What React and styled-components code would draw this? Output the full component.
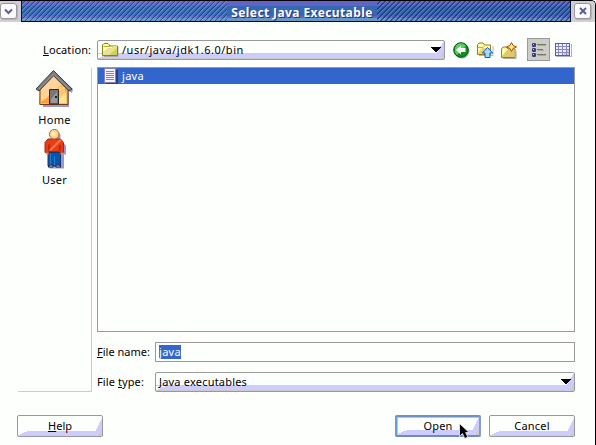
import React from 'react';
import styled, { createGlobalStyle } from 'styled-components';

const GlobalStyle = createGlobalStyle`
  * { box-sizing: border-box; }
  body { margin: 0; overflow: hidden; background: #fdfffd; }
`;

const Window = styled.div`
  position: relative;
  width: 596px;
  height: 445px;
  display: flex;
  flex-direction: column;
  background: #fdfffd;
  border-right: 1px solid #000;
  border-top: 1px solid #000;
  border-top-right-radius: 5px;
  overflow: hidden;
  color: #000;
  font: 11px/14px 'Noto Sans', 'Open Sans', sans-serif;
`;

const TitleBar = styled.header`
  display: flex;
  height: 21px;
`;

const TitleEnd = styled.div`
  flex: none;
  width: ${p => p.$width}px;
  padding: 2px 0 0 ${p => p.$pad}px;
  background: #d0ced4;
  border-bottom: 1px solid #ccccff;
`;

const FrameButton = styled.div`
  width: 17px;
  height: 16px;
  border: 1px solid #99979c;
  border-radius: 3px;
  background: #fbfbff;
  box-shadow: 1px 1px 0 #b6b4be;
  display: flex;
  align-items: center;
  justify-content: center;
`;

const TitleFill = styled.div`
  flex: 1;
  display: flex;
  justify-content: center;
  border-left: 1px solid #111133;
  border-right: 1px solid #111133;
  border-bottom: 1px solid #000;
  background:
    repeating-linear-gradient(135deg, transparent 0 1.8px, rgba(18, 38, 100, .6) 1.8px 2.8px, rgba(112, 160, 218, .45) 2.8px 3.536px),
    linear-gradient(#6263c6 0 5px, #3568b2 5px 15px, #6263c6 15px 17px, #5d9ac9 17px);
`;

const Title = styled.h1`
  margin: 0 0 0 12px;
  width: 150px;
  height: 20px;
  text-align: center;
  white-space: nowrap;
  color: #fff;
  font: bold 12px/24px 'Noto Sans', sans-serif;
  letter-spacing: ${p => p.$spacing}px;
  text-shadow: 1px 1px 0 #27306c;
  background: linear-gradient(#6263c6 0 5px, #3568b2 5px 15px, #6263c6 15px 17px, #5d9ac9 17px);
`;

const LocationRow = styled.div`
  display: flex;
  height: 24px;
  margin-top: 16px;
  padding-left: 43px;
`;

const Text = styled.span`
  display: block;
  flex: none;
  white-space: nowrap;
  letter-spacing: ${p => p.$spacing || 0}px;
  width: ${p => (p.$width ? `${p.$width}px` : 'auto')};
  u { text-underline-offset: 1px; text-decoration-thickness: 1px; text-decoration-skip-ink: none; }
`;

const LocationLabel = styled(Text)`
  padding-top: 5px;
`;

const Combo = styled.div`
  display: flex;
  align-items: center;
  flex: none;
  width: ${p => p.$width}px;
  height: ${p => p.$height}px;
  margin-top: ${p => p.$top || 0}px;
  padding: 0 3px 0 ${p => p.$pad}px;
  border: 1px solid #999;
  border-radius: 2px;
  background:
    linear-gradient(156deg, #fdfffd 0 4px, transparent 4px) left bottom / 11px 5px no-repeat,
    linear-gradient(120deg, transparent 0 7px, #ccccff 7px 12px, #ccc 12px) right bottom / 9px 17px no-repeat,
    linear-gradient(#ccccff 0 5px, #cacacc 5px) left bottom / 100% 6px no-repeat,
    #fdfffd;
`;

const PathText = styled(Text)`
  margin-left: 3px;
`;

const Spacer = styled.div`
  flex: 1;
`;

const Tools = styled.div`
  display: flex;
  align-items: center;
  margin-left: 8px;
`;

const Tool = styled.div`
  display: flex;
  width: 24px;
  height: 24px;
  align-items: center;
`;

const ToggleTool = styled.div`
  display: flex;
  align-items: center;
  justify-content: center;
  width: 23px;
  height: 23px;
  margin: 0 5px 1px 2px;
  border: 1px solid #999;
  background: #ccccca;
`;

const Main = styled.div`
  display: flex;
  margin-top: 5px;
  padding-left: 18px;
  height: 326px;
`;

const Sidebar = styled.nav`
  display: flex;
  flex-direction: column;
  align-items: center;
  width: 74px;
  height: 324px;
  margin-top: 1px;
  padding-top: 1px;
  border-right: 1px solid #ccc;
  border-bottom: 1px solid #ccc;
`;

const Shortcut = styled.div`
  display: flex;
  flex-direction: column;
  align-items: center;
  height: 60px;
  gap: 4px;
`;

const Panel = styled.div`
  width: 478px;
  margin-left: 5px;
`;

const FileList = styled.div`
  height: 265px;
  border: 1px solid #999;
`;

const FileRow = styled.div`
  display: flex;
  align-items: center;
  gap: 4px;
  height: 16px;
  padding-left: 6px;
  background: #3366cc;
  color: #fff;
`;

const Field = styled.label`
  display: flex;
  align-items: center;
  height: 20px;
  margin-top: 10px;
`;

const FieldLabel = styled(Text)`
  width: 58px;
`;

const Input = styled.div`
  display: flex;
  align-items: center;
  width: 420px;
  height: 20px;
  padding-left: 3px;
  border: 1px solid #999;
`;

const Selected = styled(Text)`
  height: 14px;
  background: #3366cc;
  color: #fff;
`;

const Footer = styled.footer`
  display: flex;
  margin-top: 22px;
  padding-left: 17px;
  gap: 8px;
  width: 575px;
`;

const Button = styled.div`
  display: flex;
  justify-content: center;
  width: 86px;
  height: 22px;
  padding-top: ${p => (p.$primary ? 2 : 3)}px;
  border: 1px solid #999;
  border-radius: 2px;
  background:
    linear-gradient(156deg, #fdfffd 0 4px, transparent 4px) left bottom / 11px 5px no-repeat,
    linear-gradient(115deg, transparent 0 7.5px, #ccccff 7.5px 12px, #ccc 12px) right bottom / 9px 17px no-repeat,
    linear-gradient(#ccccff, #ccccff) left bottom / 100% 5px no-repeat,
    #fdfffd;
  ${p => p.$primary && 'border-width: 2px; border-color: #6f92c2 #879bce #7388bc #6c9ed6; box-shadow: inset 1px 1px #99ccff;'}
`;

const Pointer = styled.div`
  position: absolute;
  left: 459px;
  top: 422px;
  display: flex;
`;

const Arrow = () => (
  <svg width="10" height="6" shapeRendering="crispEdges">
    <path d="M0 0h10v1H9v1H8v1H7v1H6v1H4V4H3V3H2V2H1V1H0z" fill="#000" />
  </svg>
);

const Folder = () => (
  <svg width="17" height="14" viewBox="0 0 17 14">
    <path d="M2 13.5h14V4" fill="none" stroke="#aaa8b4" />
    <path d="M.5 12.5V2L2 .5h4L7.5 2v1h8v9.5z" fill="#ffffaf" stroke="#858512" />
    <path d="M1 12 12 3h3v9z" fill="#e7e780" />
    <path d="m1 9 5-4h4l-9 7z" fill="#f3d4b1" />
    <path d="M7 12 15 5v7z" fill="#d0cf61" />
    <path d="M1.5 3.5h6l1-1" fill="none" stroke="#b6ad3c" />
  </svg>
);

const BackIcon = () => (
  <svg width="17" height="17">
    <circle cx="9" cy="9" r="7.4" fill="#aaa" />
    <circle cx="8" cy="8" r="7.3" fill="#108d21" stroke="#07551b" />
    <path d="M2 7a6 6 0 0 1 11-3L4 13a6 6 0 0 1-2-6z" fill="#53d459" />
    <path d="M3 8 8 3.5V6h4.5v4H8v2.5z" fill="#fff" />
  </svg>
);

const UpIcon = () => (
  <svg width="17" height="17">
    <path d="M2 13.5h14V4" fill="none" stroke="#b5b3b8" />
    <path d="M.5 12.5v-10L2 1h4l1.5 2h6v9.5z" fill="#ffffaa" stroke="#a37b1e" />
    <path d="m1 11 4-5h8v6H1z" fill="#ead46e" />
    <path d="M1 5.5h5l1.5-1.5" fill="none" stroke="#cfab45" />
    <path d="M10.5 5.5 15.7 11H13v4.5H8V11H5.3z" fill="#9cdcff" stroke="#185aaa" />
  </svg>
);

const NewFolderIcon = () => (
  <svg width="17" height="17">
    <path d="M2 16.5h13V9" fill="none" stroke="#aaa" />
    <path d="M.5 15.5V7L2 5h3.5L7 7h7v8.5z" fill="#ffffaa" stroke="#958023" />
    <path d="m1 14 5-6h7v7H1z" fill="#dfc96a" />
    <path d="m10.5.5 1.5 3 3.5 1.5L12 6.5l-1.5 3-1.5-3L5.5 5 9 3.5z" fill="#fff66c" stroke="#b9401b" />
  </svg>
);

const ListIcon = () => (
  <svg width="16" height="16">
    {[1, 6, 11].map(y => (
      <g key={y}>
        <rect x="1" y={y} width="4" height="4" rx="1.3" fill="#3b3e75" />
        <path d={`M2 ${y + 1.5}h1`} stroke="#b9c8f2" />
        <path d={`M6 ${y + 1.5}h${y === 6 ? 6 : 9}`} stroke="#77775a" />
        <path d={`M7 ${y + 2.5}h${y === 6 ? 6 : 8}`} stroke="#aaaaa0" />
      </g>
    ))}
  </svg>
);

const DetailsIcon = () => (
  <svg width="17" height="14" shapeRendering="crispEdges">
    <path d="M1 13.5h15.5V1" fill="none" stroke="#b3b1cd" />
    <path d="M0 0h15v13H0z" fill="#eeedff" />
    <path d="m15 5-8 7h8z" fill="#c9caef" />
    <path d="M0 3.5h15M0 6.5h15M0 9.5h15M3.5 0v12M7.5 0v12M11.5 0v12" fill="none" stroke="#8587c0" />
    <path d="M.5.5h14v12H.5z" fill="none" stroke="#5a5ca0" />
  </svg>
);

const HomeIcon = () => (
  <svg width="40" height="40" viewBox="0 0 40 40">
    <path d="m8 20 14-15 16 15-1 4-3-2v16H8z" fill="#9999cf" />
    <path d="M5 17 18.5 4 33 18v17.5H4.8z" fill="#ffbc5c" stroke="#7c390b" />
    <path d="m6 18 12.5-12L27 15 6 33z" fill="#ffd49b" />
    <path d="M6 33 32 17v4L16 34H6z" fill="#ff9d3c" />
    <path d="M21 34 31 24v10z" fill="#fff1a0" />
    <path d="M24 18h6v16h-6z" fill="#ffdd88" opacity=".6" />
    <path d="m1 20 17.5-18.5L37 20l-3 2L18.5 6.8 4 22z" fill="#7b7b7b" stroke="#3f3f3f" />
    <path d="m4 20 14.5-15L34 20" fill="none" stroke="#999" />
    <path d="M14.5 35V20.5h9V35z" fill="#777" stroke="#292c33" />
    <path d="m16 30 6-7v11h-6z" fill="#999" />
    <path d="M20 27h2v2h-2z" fill="#222" />
  </svg>
);

const UserIcon = () => (
  <svg width="24" height="40" viewBox="-1.5 .5 24 40">
    <path d="M8 3h6l3 3v6l5.5 5v9h-2v14H6V20z" fill="#9999cf" />
    <path d="M4.5 24v13.5H17V24z" fill="#0755af" stroke="#143775" />
    <path d="M7 25v12m4-9v9" fill="none" stroke="#287bd0" />
    <path d="M1.5 24V14l3-3.5H17l3 3.5v10h-3.5v-7l-1 6h-10v-7 8z" fill="#e63d16" stroke="#b4210d" />
    <path d="m5 22 11-11h3L8 22z" fill="#ff7444" />
    <circle cx="10.7" cy="5.7" r="4.8" fill="#ffd28e" stroke="#b86935" />
    <path d="M8 3h4v4H8z" fill="#fff0b8" />
    <path d="M2 24h3v2H3zm15 0h3l-1 2h-2z" fill="#d89858" />
    <path d="m4.5 38.5 2-2h3v2zm8 0v-2h3l2 2z" fill="#c9cdd0" stroke="#202338" />
  </svg>
);

const FileIcon = () => (
  <svg width="14" height="16" shapeRendering="crispEdges">
    <path d="M2 2h12v14H2z" fill="#343978" />
    <path d="M.5.5h11v14H.5z" fill="#f4f3ff" stroke="#8581b6" />
    <path d="M2 3.5h8M2 5.5h8M2 7.5h8M2 9.5h8M2 11.5h8" stroke="#8581b6" />
  </svg>
);

export default function App() {
  return (
    <>
      <GlobalStyle />
      <Window>
        <TitleBar>
          <TitleEnd $width={21} $pad={0}>
            <FrameButton>
              <svg width="9" height="7"><path d="m1 1.5 3.5 3.5L8 1.5" fill="none" stroke="#5b5c99" strokeWidth="2" /></svg>
            </FrameButton>
          </TitleEnd>
          <TitleFill><Title $spacing={0.4}>Select Java Executable</Title></TitleFill>
          <TitleEnd $width={24} $pad={3}>
            <FrameButton>
              <svg width="8" height="8"><path d="m1 1 6 6m0-6L1 7" fill="none" stroke="#5b5c99" strokeWidth="2" /></svg>
            </FrameButton>
          </TitleEnd>
        </TitleBar>
        <LocationRow>
          <LocationLabel $spacing={0.12} $width={54}><u>L</u>ocation:</LocationLabel>
          <Combo $width={348} $height={20} $top={2} $pad={4}>
            <Folder />
            <PathText $spacing={0.52}>/usr/java/jdk1.6.0/bin</PathText>
            <Spacer />
            <Arrow />
          </Combo>
          <Tools>
            <Tool><BackIcon /></Tool>
            <Tool><UpIcon /></Tool>
            <Tool><NewFolderIcon /></Tool>
            <ToggleTool><ListIcon /></ToggleTool>
            <DetailsIcon />
          </Tools>
        </LocationRow>
        <Main>
          <Sidebar>
            <Shortcut><HomeIcon /><Text $spacing={0.3}>Home</Text></Shortcut>
            <Shortcut><UserIcon /><Text $spacing={0.2}>User</Text></Shortcut>
          </Sidebar>
          <Panel>
            <FileList>
              <FileRow><FileIcon /><Text $spacing={0.3}>java</Text></FileRow>
            </FileList>
            <Field>
              <FieldLabel $spacing={0}><u>F</u>ile name:</FieldLabel>
              <Input><Selected $spacing={0.3}>java</Selected></Input>
            </Field>
            <Field>
              <FieldLabel $spacing={0.1}>File <u>t</u>ype:</FieldLabel>
              <Combo $width={420} $height={20} $pad={3}>
                <Text $spacing={0.2}>Java executables</Text>
                <Spacer />
                <Arrow />
              </Combo>
            </Field>
          </Panel>
        </Main>
        <Footer>
          <Button><Text $spacing={0}><u>H</u>elp</Text></Button>
          <Spacer />
          <Button $primary><Text $spacing={0.2}>Open</Text></Button>
          <Button><Text $spacing={0.2}>Cancel</Text></Button>
        </Footer>
        <Pointer>
          <svg width="11" height="17">
            <path d="M.5.5v13l3-3 2.3 5 3-1.4L6.6 9.5H10z" fill="#000" stroke="#fff" strokeWidth=".7" />
          </svg>
        </Pointer>
      </Window>
    </>
  );
}
